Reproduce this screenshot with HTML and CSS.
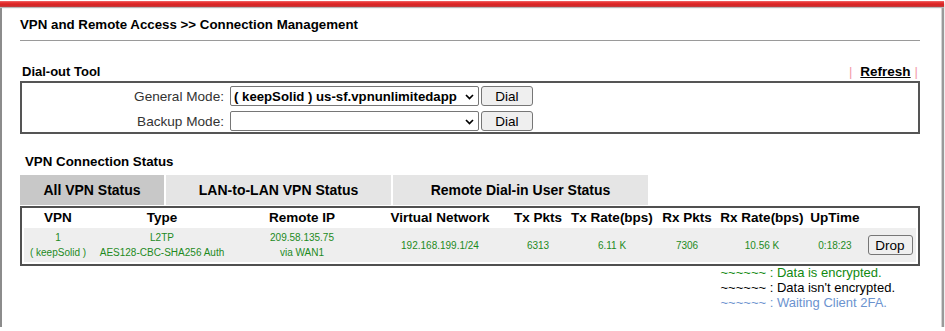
FILE: index.html
```html
<!DOCTYPE html>
<html>
<head>
<meta charset="utf-8">
<title>Connection Management</title>
<link rel="stylesheet" href="styles.css">
</head>
<body>
<div class="frame">
  <div class="topbar"></div>
  <div class="content">
    <h1 class="page-title">VPN and Remote Access &gt;&gt; Connection Management</h1>

    <div class="section-head">
      <span class="section-title">Dial-out Tool</span>
      <span class="refresh"><span class="pipe">|</span><a href="#" class="refresh-link">Refresh</a><span class="pipe pipe-right">|</span></span>
    </div>

    <div class="dial-box">
      <div class="dial-row">
        <label class="dial-label">General Mode:</label>
        <span class="select-wrap">
          <select class="mode-select bold-select"><option>( keepSolid ) us-sf.vpnunlimitedapp</option></select>
          <svg class="chev" width="9" height="6" viewBox="0 0 9 6"><path d="M1 1 L4.5 4.5 L8 1" fill="none" stroke="#000" stroke-width="1.7"/></svg>
        </span>
        <button class="btn dial-btn">Dial</button>
      </div>
      <div class="dial-row">
        <label class="dial-label">Backup Mode:</label>
        <span class="select-wrap">
          <select class="mode-select"><option></option></select>
          <svg class="chev" width="9" height="6" viewBox="0 0 9 6"><path d="M1 1 L4.5 4.5 L8 1" fill="none" stroke="#000" stroke-width="1.7"/></svg>
        </span>
        <button class="btn dial-btn">Dial</button>
      </div>
    </div>

    <div class="section-title status-title">VPN Connection Status</div>

    <div class="tabs">
      <div class="tab tab-active tab-all">All VPN Status</div>
      <div class="tab tab-lan">LAN-to-LAN VPN Status</div>
      <div class="tab tab-dial">Remote Dial-in User Status</div>
    </div>

    <div class="table-box">
      <table class="vpn-table">
        <colgroup>
          <col class="c-vpn"><col class="c-type"><col class="c-ip"><col class="c-vn">
          <col class="c-txp"><col class="c-txr"><col class="c-rxp"><col class="c-rxr">
          <col class="c-up"><col class="c-drop">
        </colgroup>
        <thead>
          <tr>
            <th>VPN</th><th>Type</th><th>Remote IP</th><th>Virtual Network</th>
            <th>Tx Pkts</th><th>Tx Rate(bps)</th><th>Rx Pkts</th><th>Rx Rate(bps)</th>
            <th>UpTime</th><th></th>
          </tr>
        </thead>
        <tbody>
          <tr>
            <td>1<br>( keepSolid )</td>
            <td>L2TP<br>AES128-CBC-SHA256 Auth</td>
            <td>209.58.135.75<br>via WAN1</td>
            <td>192.168.199.1/24</td>
            <td>6313</td>
            <td>6.11 K</td>
            <td>7306</td>
            <td>10.56 K</td>
            <td>0:18:23</td>
            <td><button class="btn drop-btn">Drop</button></td>
          </tr>
        </tbody>
      </table>
    </div>

    <div class="legend-wrap">
      <div class="legend">
        <div class="legend-line enc">~~~~~~ : Data is encrypted.</div>
        <div class="legend-line plain">~~~~~~ : Data isn't encrypted.</div>
        <div class="legend-line wait">~~~~~~ : Waiting Client 2FA.</div>
      </div>
    </div>
  </div>
</div>
</body>
</html>
```

FILE: styles.css
```css
html, body {
  margin: 0;
  padding: 0;
  background: #ffffff;
  font-family: "Liberation Sans", Arial, sans-serif;
  color: #000;
}

.frame {
  margin-top: 1px;
  width: 939px;
  height: 326px;
  border-left: 2px solid #8c8c8c;
  box-shadow: 1px 1px 0 #d4d4d4, 3px 3px 1px #9a9a9a;
  background: #fff;
}

.topbar {
  height: 6px;
  margin-left: -2px;
  margin-right: -3px;
  background: linear-gradient(#f06a6a 0%, #e43030 30%, #d82222 65%, #c04040 100%);
  box-shadow: 0 1px 1px #b9b9b9;
}

.content {
  padding: 0 21px 0 18px;
}

.page-title {
  margin: 0;
  padding: 10px 0 7px 0;
  font-size: 13.3px;
  line-height: 16px;
  font-weight: bold;
  border-bottom: 1px solid #9a9a9a;
}

.section-head {
  margin-top: 22px;
  padding: 0 2px;
  display: flex;
  justify-content: space-between;
  line-height: 18px;
  height: 18px;
}

.section-title {
  font-size: 13px;
  font-weight: bold;
}

.refresh {
  font-size: 13px;
  font-weight: bold;
  display: flex;
  align-items: center;
}

.pipe {
  color: #f39aa8;
  font-weight: normal;
}

.refresh-link {
  color: #000;
  margin: 0 4px 0 8px;
  text-decoration: underline;
  font-size: 13.5px;
}

.dial-box {
  border: 2px solid #555;
  padding: 3px 0 1px 0;
  display: flex;
  flex-direction: column;
  gap: 5px;
}

.dial-row {
  display: flex;
  align-items: center;
  height: 20px;
}

.dial-label {
  width: 205px;
  text-align: right;
  font-size: 13.6px;
  color: #333;
  padding-right: 3px;
  box-sizing: border-box;
}

.select-wrap {
  position: relative;
  display: inline-block;
  margin-left: 3px;
}

.mode-select {
  appearance: none;
  -webkit-appearance: none;
  width: 249px;
  height: 20px;
  border: 1px solid #767676;
  border-radius: 2px;
  background: #fff;
  font-family: "Liberation Sans", Arial, sans-serif;
  font-size: 13.2px;
  padding: 0 0 0 3px;
  color: #000;
  display: block;
}

.bold-select {
  font-weight: bold;
}

.chev {
  position: absolute;
  right: 5px;
  top: 8px;
}

.btn {
  font-family: "Liberation Sans", Arial, sans-serif;
  font-size: 13.5px;
  color: #000;
  background: #efefef;
  border: 1px solid #767676;
  border-radius: 3px;
  padding: 0;
}

.dial-btn {
  margin-left: 2px;
  width: 52px;
  height: 20px;
}

.status-title {
  margin-top: 20px;
  padding-left: 5px;
  line-height: 16px;
  font-size: 13.3px;
}

.tabs {
  margin-top: 5px;
  display: flex;
  gap: 2px;
}

.tab {
  height: 30px;
  line-height: 30px;
  text-align: center;
  font-size: 14px;
  font-weight: bold;
  background: #e5e5e5;
}

.tab-active {
  background: #c8c8c8;
}

.tab-all { width: 144px; }
.tab-lan { width: 225px; }
.tab-dial { width: 255px; }

.table-box {
  margin-top: 1px;
  border: 2px solid #505050;
  padding: 2px;
}

.vpn-table {
  width: 100%;
  table-layout: fixed;
  border-collapse: collapse;
}

.c-vpn { width: 68px; }
.c-type { width: 140px; }
.c-ip { width: 140px; }
.c-vn { width: 136px; }
.c-txp { width: 60px; }
.c-txr { width: 88px; }
.c-rxp { width: 62px; }
.c-rxr { width: 88px; }
.c-up { width: 58px; }
.c-drop { width: 52px; }

.vpn-table th {
  padding: 0;
  height: 18px;
  line-height: 16px;
  font-size: 13.5px;
  font-weight: bold;
  text-align: center;
  white-space: nowrap;
  vertical-align: top;
}

.vpn-table td {
  padding: 0;
  height: 34px;
  background: #eeeeee;
  font-size: 10px;
  line-height: 15px;
  color: #1d8a1d;
  text-align: center;
  vertical-align: middle;
  white-space: nowrap;
}

.drop-btn {
  width: 45px;
  height: 20px;
}

.legend-wrap {
  display: flex;
  justify-content: flex-end;
  padding-right: 25px;
  margin-top: -1px;
}

.legend {
  font-size: 13px;
  line-height: 15px;
}

.legend-line.enc { color: #118a11; }
.legend-line.plain { color: #000; }
.legend-line.wait { color: #6c93cf; }
```
